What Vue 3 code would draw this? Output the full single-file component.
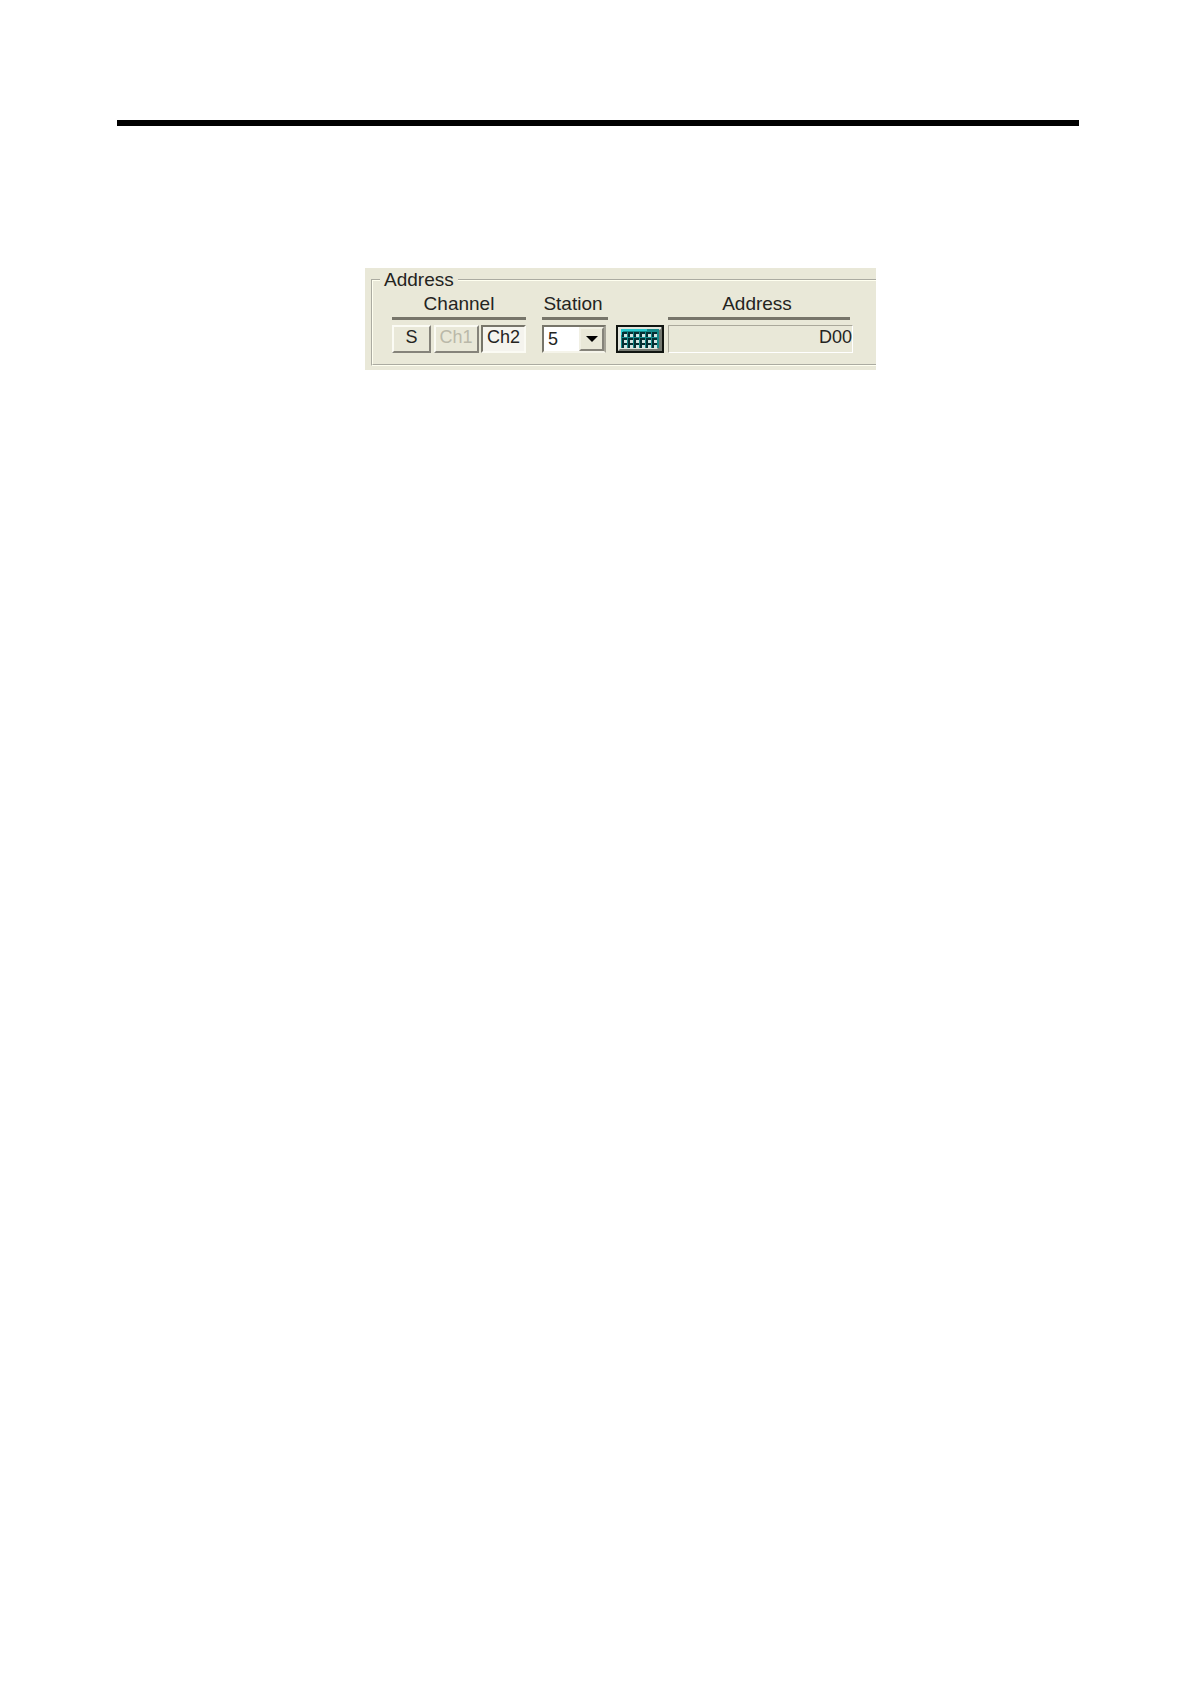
<template>
  <main class="page">
    <hr class="page-rule" />

    <form class="panel" @submit.prevent>
      <fieldset class="address-box">
        <legend>Address</legend>

        <div class="columns">
          <div class="column channel" role="group" aria-labelledby="channel-title">
            <span id="channel-title" class="title">Channel</span>
            <div class="controls">
              <button
                v-for="item in channels"
                :key="item.name"
                type="button"
                class="channel-button"
                :class="{ small: item.name === 'S', pressed: channel === item.name }"
                :disabled="item.disabled"
                @click="channel = item.name"
              >{{ item.name }}</button>
            </div>
          </div>

          <div class="column station">
            <label class="title" for="station">Station</label>
            <div class="select-box">
              <select id="station" v-model="station">
                <option v-for="n in 9" :key="n" :value="n">{{ n }}</option>
              </select>
              <span class="arrow">
                <svg width="12" height="6" viewBox="0 0 12 6"><path d="M0 0h12L6 6z" /></svg>
              </span>
            </div>
          </div>

          <button type="button" class="keypad" aria-label="Keypad">
            <svg width="48" height="28" viewBox="0 0 48 28">
              <rect width="48" height="28" fill="#101410" />
              <rect x="2" y="2" width="44" height="24" fill="#747870" />
              <path d="M2 2h43v2l-2 1v17l-2 2H4l-2 2z" fill="#e2e5dd" />
              <rect x="5" y="4" width="38" height="19" fill="#168a8a" />
              <path d="M5 4h26v2H7v4H5z" fill="#28c8cd" />
              <g v-for="y in [8, 14, 19]" :key="y">
                <g v-for="x in [7, 13, 19, 25, 31, 37]" :key="x">
                  <rect :x="x - 1" :y="y - 1" width="5" height="5" fill="#052e32" />
                  <rect :x="x + 1" :y="y + 1" width="3" height="3" fill="#d3e4e2" />
                </g>
              </g>
            </svg>
          </button>

          <div class="column address">
            <label class="title" for="address">Address</label>
            <input id="address" v-model="address" type="text" readonly />
          </div>
        </div>
      </fieldset>
    </form>
  </main>
</template>

<script setup>
import { ref } from 'vue';

const channels = [
  { name: 'S', disabled: false },
  { name: 'Ch1', disabled: true },
  { name: 'Ch2', disabled: false }
];

const channel = ref('Ch2');
const station = ref(5);
const address = ref('D00');
</script>

<style>
body {
  margin: 0;
  background: #fff;
}
</style>

<style scoped>
.page {
  padding: 120px 111px 40px 117px;
  font-family: "Liberation Sans", Arial, sans-serif;
  font-size: 18px;
  color: #24241f;
}

.page-rule {
  height: 6px;
  margin: 0;
  border: 0;
  background: #000;
}

.panel {
  margin: 142px 203px 0 248px;
  padding: 1px 0 4px 6px;
  background: #e9e8d8;
}

.address-box {
  min-width: 0;
  margin: 0;
  padding: 2px 23px 11px 19px;
  border: 2px groove #fffff0;
  border-right: 0;
}

legend {
  margin-left: -12px;
  padding: 0 4px;
  font-size: 19px;
  line-height: 22px;
}

.columns {
  display: flex;
  align-items: flex-end;
}

.column {
  display: flex;
  flex-direction: column;
  gap: 5px;
}

.channel {
  width: 134px;
  margin-right: 16px;
}

.station {
  width: 66px;
  margin-right: 8px;
}

.address {
  flex: 1;
  min-width: 0;
}

.title {
  display: block;
  padding-bottom: 2px;
  border-bottom: 3px solid #77756a;
  font-size: 19px;
  line-height: 22px;
  text-align: center;
}

.station .title,
.address .title {
  padding-right: 4px;
}

.address .title {
  margin-right: 3px;
}

.controls {
  display: flex;
  justify-content: space-between;
}

button,
select,
input {
  box-sizing: border-box;
  height: 28px;
  margin: 0;
  border-radius: 0;
  font: inherit;
  color: inherit;
}

.channel-button {
  width: 45px;
  padding: 0 0 4px;
  border: 2px solid;
  border-color: #fbfbf4 #85837a #85837a #fbfbf4;
  background: #e9e8d8;
  line-height: 20px;
}

.channel-button.small {
  width: 39px;
}

.channel-button:disabled {
  color: #bab8a9;
}

.channel-button.pressed {
  border-color: #77756a #fbfbf4 #fbfbf4 #77756a;
  background: #f5f4ee;
}

.select-box {
  display: grid;
  grid-template-columns: 1fr 25px;
  box-sizing: border-box;
  height: 28px;
  margin-right: 2px;
  border: 2px solid;
  border-color: #77756a #a5a397 #f5f4ea #77756a;
  background: #fff;
}

select {
  grid-area: 1 / 1 / 2 / 3;
  height: 24px;
  padding: 0 0 0 4px;
  border: 0;
  background: transparent;
  appearance: none;
}

.arrow {
  grid-area: 1 / 2;
  display: flex;
  align-items: center;
  justify-content: center;
  border: 2px solid;
  border-color: #f1f0e4 #85837a #85837a #f1f0e4;
  background: #e9e8d8;
  pointer-events: none;
}

.keypad {
  display: block;
  width: 48px;
  margin-right: 4px;
  padding: 0;
  border: 0;
  background: none;
}

.keypad svg {
  display: block;
}

input {
  width: 100%;
  padding: 0 0 3px;
  border: 1px solid;
  border-color: #aaa89b #fff #fff #aaa89b;
  background: #e9e8d8;
  text-align: right;
}
</style>
